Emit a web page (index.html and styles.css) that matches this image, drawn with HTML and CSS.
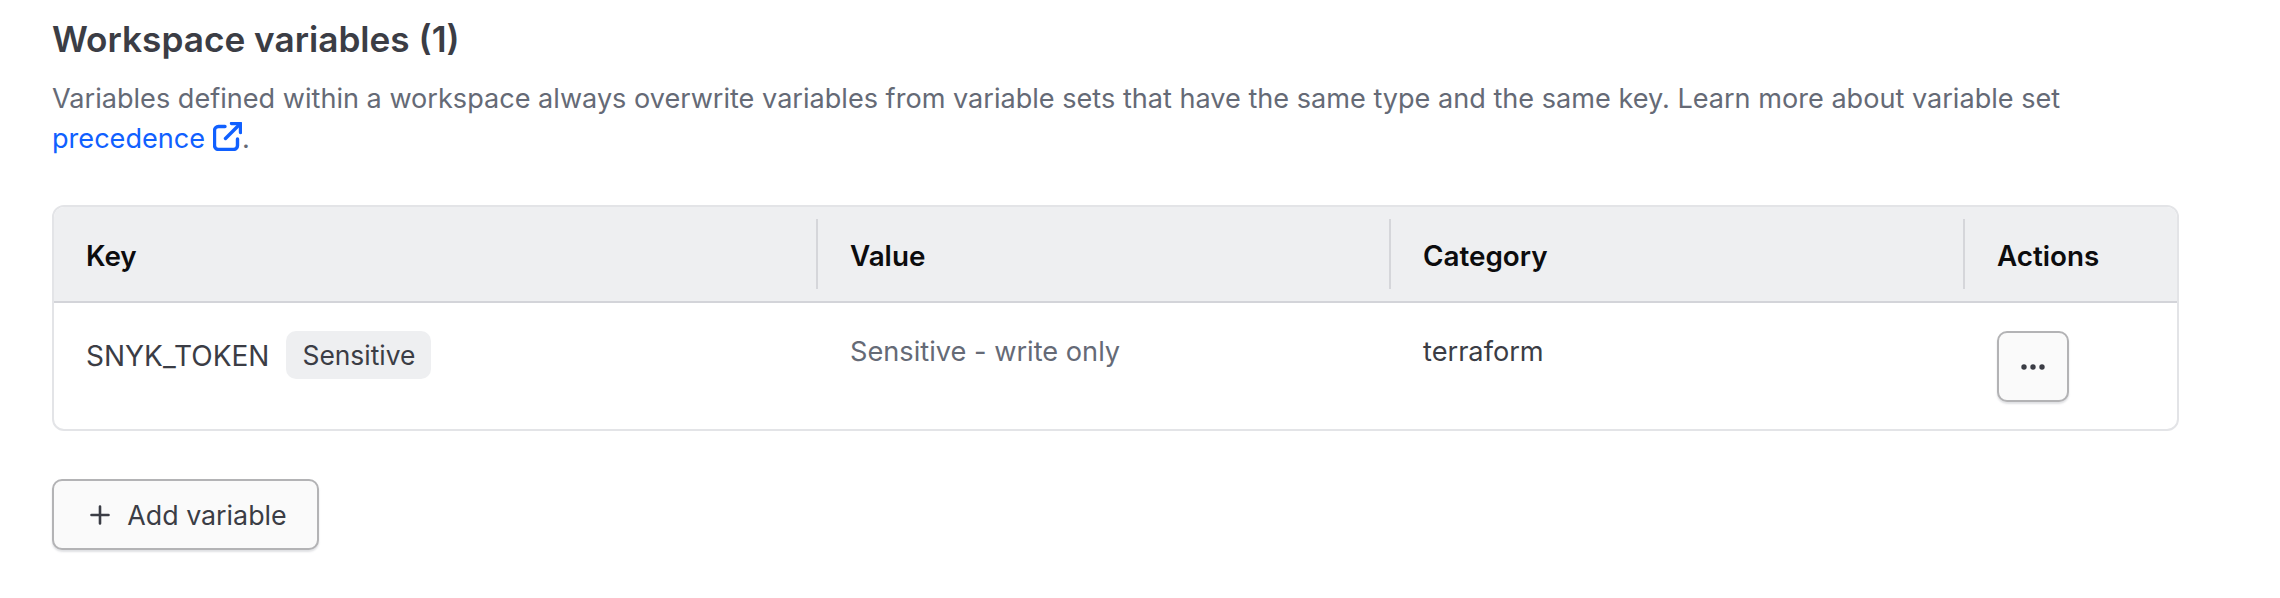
FILE: index.html
```html
<!DOCTYPE html>
<html lang="en">
<head>
<meta charset="utf-8">
<title>Workspace variables</title>
<link rel="stylesheet" href="styles.css">
</head>
<body>
<main class="page">
  <h2 class="title">Workspace variables (1)</h2>
  <p class="desc">Variables defined within a workspace always overwrite variables from variable sets that have the same type and the same key. Learn more about variable set <a class="link" href="#">precedence<svg class="ext" viewBox="0 0 29 29" fill="none" stroke="currentColor" stroke-width="3.400" stroke-linecap="round" stroke-linejoin="round"><path d="M12 4.500H5.500a4 4 0 0 0-4 4v15a4 4 0 0 0 4 4h15a4 4 0 0 0 4-4V17"/><path d="M12.500 16.500 27 2"/><path d="M18.500 1.500H27.500V10.500"/></svg></a>.</p>
  <div class="table">
    <div class="row head">
      <div class="th">Key</div>
      <div class="th sep">Value</div>
      <div class="th sep">Category</div>
      <div class="th sep">Actions</div>
    </div>
    <div class="row body">
      <div class="td key"><span class="token">SNYK_TOKEN</span><span class="badge">Sensitive</span></div>
      <div class="td muted">Sensitive - write only</div>
      <div class="td">terraform</div>
      <div class="td act">
        <button class="btn icon" aria-label="Actions"><svg class="dots" viewBox="0 0 24 6" fill="currentColor"><circle cx="3" cy="3" r="2.700"/><circle cx="12" cy="3" r="2.700"/><circle cx="21" cy="3" r="2.700"/></svg></button>
      </div>
    </div>
  </div>
  <button class="btn add"><svg class="plus" viewBox="0 0 20 20" fill="none" stroke="currentColor" stroke-width="2.600" stroke-linecap="round"><path d="M10 1.500v17M1.500 10h17"/></svg><span>Add variable</span></button>
</main>
</body>
</html>
```

FILE: styles.css
```css
* { box-sizing: border-box; }
html, body { margin: 0; background: #fff; }
body { font-family: Inter, "Liberation Sans", sans-serif; }
.page { width: 2280px; height: 598px; padding: 15px 102px 0 52px; overflow: hidden; }
.title { margin: 0; font-size: 35.200px; line-height: 48px; font-weight: 600; color: #3b3d45; }
.desc { margin: 16px 0 0; font-size: 27.100px; line-height: 40px; color: #656a76; width: 2060px; }
.link { color: #1060ff; text-decoration: none; }
.ext { width: 29px; height: 29px; margin-left: 8px; vertical-align: -3px; }
.table { margin-top: 46px; width: 2127px; border: 2px solid #e3e4e7; border-radius: 12px; overflow: hidden; }
.row { display: grid; grid-template-columns: 762px 573px 574px 1fr; }
.head { height: 96px; background: #eeeff1; border-bottom: 2px solid #d3d4d9; align-items: center; }
.th { height: 70px; display: flex; align-items: center; padding: 3px 0 0 32px; font-size: 27.800px; font-weight: 600; color: #0c0c0e; }
.sep { border-left: 2px solid #d5d6da; }
.body { height: 126px; }
.td { padding: 29px 0 0 34px; font-size: 27.200px; line-height: 40px; color: #3b3d45; }
.muted { color: #656a76; }
.key { padding: 28px 0 0 32px; display: flex; align-items: flex-start; gap: 17px; }
.token { padding-top: 5px; font-size: 28px; }
.badge { height: 48px; padding: 0 16px; display: flex; align-items: center; background: #eeeff1; border-radius: 10px; font-size: 26.400px; color: #3b3d45; }
.act { padding-top: 28px; }
.btn { display: flex; align-items: center; justify-content: center; background: #fafafa; border: 2px solid #b3b3b5; border-radius: 10px; box-shadow: 0 2px 2px rgba(101,106,118,.2); color: #3b3d45; font-family: inherit; padding: 0; }
.icon { width: 72px; height: 71px; }
.dots { width: 24px; height: 6px; }
.add { margin-top: 48px; width: 267px; height: 71px; gap: 17px; padding-left: 6px; font-size: 26.800px; }
.plus { width: 20px; height: 20px; }
```
